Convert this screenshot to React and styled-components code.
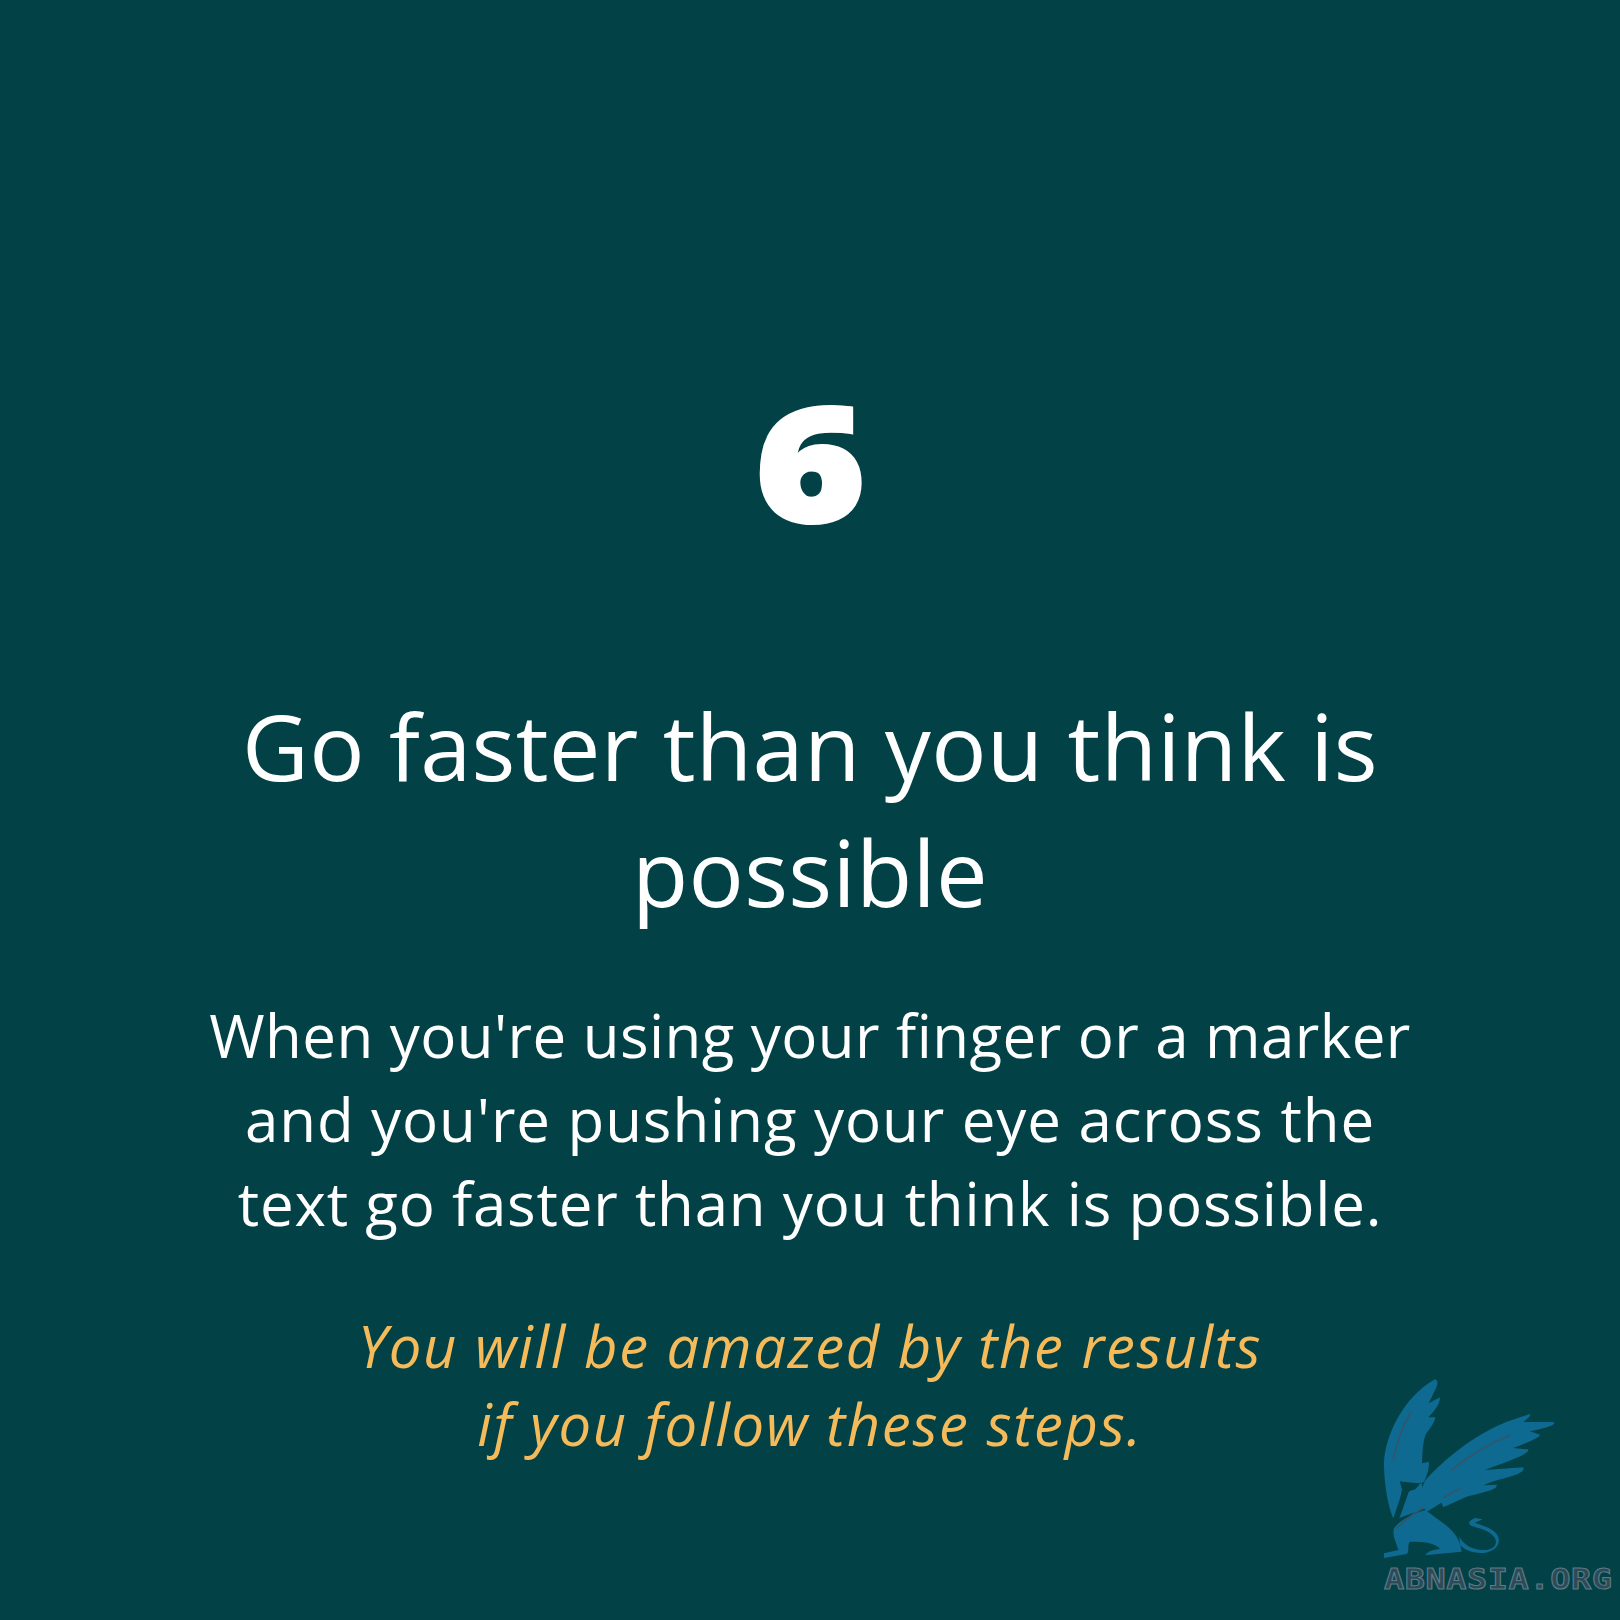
import React from "react";
import styled, { createGlobalStyle } from "styled-components";

const Global = createGlobalStyle`
  html, body { margin: 0; padding: 0; background: #024146; }
`;

const Page = styled.main`
  position: relative;
  width: 1620px;
  height: 1620px;
  background: #024146;
  color: #fff;
  font-family: "Open Sans", "Noto Sans", sans-serif;
  display: flex;
  flex-direction: column;
  align-items: center;
  text-align: center;
  padding-top: 370px;
  box-sizing: border-box;
  overflow: hidden;
`;

const Numeral = styled.div`
  font-family: "Open Sans", "Liberation Sans", sans-serif;
  font-weight: 800;
  font-size: 158px;
  line-height: 180px;
  -webkit-text-stroke: 4px #fff;
  transform: scaleX(1.18);
`;

const Title = styled.h1`
  margin: 133px 0 0;
  font-weight: 400;
  font-size: 92px;
  line-height: 126px;
  letter-spacing: 0.27px;
  white-space: nowrap;
`;

const Body = styled.div`
  margin: 58px 0 0;
  font-weight: 400;
  font-size: 60px;
  line-height: 84px;
  white-space: nowrap;
`;

const BodyLine = styled.p`
  margin: 0;
  letter-spacing: ${(p) => p.$spacing}px;
`;

const Note = styled.p`
  margin: 62px 0 0;
  font-style: italic;
  font-weight: 400;
  font-size: 58px;
  line-height: 78px;
  letter-spacing: 1.7px;
  color: #f5bb5b;
  white-space: nowrap;
`;

const Mark = styled.div`
  position: absolute;
  left: 1360px;
  top: 1360px;
  display: flex;
  flex-direction: column;
  align-items: flex-start;
`;

const Griffin = styled.svg`
  display: block;
  width: 260px;
  height: 200px;
`;

const MarkText = styled.div`
  font-family: "DejaVu Sans Mono", monospace;
  font-weight: 700;
  font-size: 28px;
  line-height: 28px;
  letter-spacing: 0.45px;
  color: #2c4a58;
  -webkit-text-stroke: 1px #5d7b85;
  margin: 6px 0 0 24px;
  white-space: nowrap;
  transform: scaleX(1.2);
  transform-origin: left center;
`;

function GriffinLogo() {
  return (
    <Griffin viewBox="0 0 780 600">
      <g fill="#0e6a90">
        <path d="M225 58 C234 60 234 72 228 85 L206 130 L240 112 C240 128 232 145 205 172 L226 172 C224 188 210 205 198 222 C190 240 188 262 186 310 L207 305 C208 325 200 350 192 366 L180 370 L120 365 L128 392 L100 475 C84 440 72 370 72 310 C74 230 130 110 225 58 Z" />
        <path d="M195 362 C250 300 340 225 440 185 L510 162 C514 168 500 178 490 186 L580 186 C590 192 575 200 510 214 L540 224 C538 234 500 248 460 264 L505 268 C508 282 460 298 375 330 L490 322 C495 338 470 346 400 364 L370 376 L410 374 C414 388 380 394 320 410 L250 442 L244 428 L200 456 L190 440 C175 425 180 395 195 362 Z" />
        <path d="M146 395 L185 368 L198 445 L118 474 Z" />
        <path d="M196 450 L250 490 C285 515 300 540 305 575 L195 586 C205 570 225 570 240 566 C225 550 200 545 150 545 C140 555 150 575 140 582 L72 594 L72 580 L115 570 C110 550 95 525 102 505 C120 480 160 460 196 450 Z" />
        <path d="M298 530 C315 560 345 572 380 570 C408 565 415 545 400 528 C385 510 355 505 335 498 C322 492 325 482 345 474 L368 478 L345 488 C365 496 400 505 412 525 C425 548 410 572 378 578 C350 582 320 575 300 556 Z" />
      </g>
      <g fill="#034045">
        <path d="M120 364 L178 374 L166 388 L146 394 L122 462 L110 472 L120 420 L126 388 Z" />
      </g>
      <g fill="none" stroke="#34566a" strokeWidth="5" strokeLinecap="round">
        <path d="M100 300 C110 250 130 190 152 158" />
        <path d="M275 330 C330 285 390 250 450 226" />
        <path d="M252 412 C268 402 285 392 300 386" />
        <path d="M110 505 C135 480 160 460 190 444" />
      </g>
    </Griffin>
  );
}

export default function App() {
  return (
    <Page>
      <Global />
      <Numeral>6</Numeral>
      <Title>
        Go faster than you think is
        <br />
        possible
      </Title>
      <Body>
        <BodyLine $spacing={0.44}>When you're using your finger or a marker</BodyLine>
        <BodyLine $spacing={0.93}>and you're pushing your eye across the</BodyLine>
        <BodyLine $spacing={0.81}>text go faster than you think is possible.</BodyLine>
      </Body>
      <Note>
        You will be amazed by the results
        <br />
        if you follow these steps.
      </Note>
      <Mark>
        <GriffinLogo />
        <MarkText>ABNASIA.ORG</MarkText>
      </Mark>
    </Page>
  );
}
